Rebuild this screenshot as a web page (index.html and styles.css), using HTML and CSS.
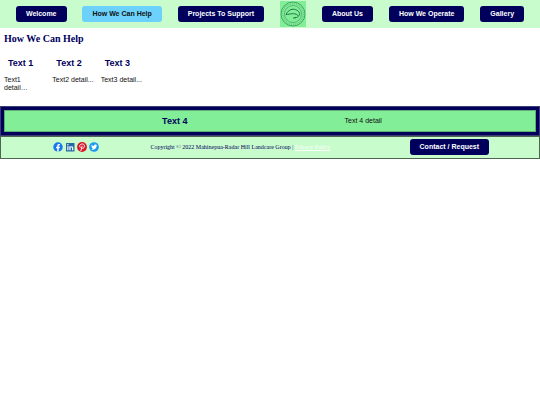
FILE: index.html
```html
<!DOCTYPE html>
<html lang="en">
<head>
  <meta charset="UTF-8" />
  <meta name="viewport" content="width=device-width, initial-scale=1.0"/>
  <title>How We Can Help</title>
  <link rel="stylesheet" href="styles.css">
</head>
<body>
  <header>
    <nav class="navbar">
      <a href="#" class="btn">Welcome</a>
      <a href="#" class="btn active">How We Can Help</a>
      <a href="#" class="btn">Projects To Support</a>
      <a href="#" class="logo" aria-label="Home">
        <svg viewBox="0 0 26 26" fill="none" stroke="#1d6b41">
          <circle cx="13" cy="13" r="12" stroke-width="0.7" opacity="0.8"/>
          <circle cx="13" cy="13" r="10.3" stroke-width="1.4" stroke-dasharray="0.8 1.1" opacity="0.35"/>
          <circle cx="13" cy="13" r="8.5" stroke-width="0.6" opacity="0.7"/>
          <path d="M6 13.500 C7.500 11 9 8.300 13 8.200 C17 8.200 20 11 19.500 13.500 C19 15.500 17 17 14.500 16.500 M6 13.500 C10 13.500 14 11 18 14.500 M13 17 L15.500 17" stroke-width="0.9"/>
        </svg>
      </a>
      <a href="#" class="btn">About Us</a>
      <a href="#" class="btn">How We Operate</a>
      <a href="#" class="btn">Gallery</a>
    </nav>
  </header>

  <main>
    <h1>How We Can Help</h1>

    <div class="help-grid">
      <section class="help-item narrow">
        <h2>Text 1</h2>
        <p>Text1 detail…</p>
      </section>
      <section class="help-item">
        <h2>Text 2</h2>
        <p>Text2 detail...</p>
      </section>
      <section class="help-item">
        <h2>Text 3</h2>
        <p>Text3 detail...</p>
      </section>
    </div>

    <div class="banner">
      <section class="banner-inner">
        <h2>Text 4</h2>
        <p>Text 4 detail</p>
      </section>
    </div>
  </main>

  <footer>
    <div class="social">
      <a href="#" aria-label="Facebook">
        <svg viewBox="0 0 20 20">
          <circle cx="10" cy="10" r="9.500" fill="#1877f2"/>
          <path d="M8.400 19.400 V12.500 H6 V9.700 H8.400 V7.700 C8.400 5.200 9.900 3.900 12 3.900 L14 4.100 V6.500 H12.800 C11.700 6.500 11.400 7.100 11.400 7.900 V9.700 H14 L13.500 12.500 H11.400 V19.400 Z" fill="#fff"/>
        </svg>
      </a>
      <a href="#" aria-label="LinkedIn">
        <svg viewBox="0 0 20 20">
          <rect x="2" y="2" width="17" height="17" rx="1" fill="#2468a4"/>
          <path d="M4.500 8.500 H7 V16.500 H4.500 Z M8.700 8.500 H11 V9.700 C12.500 7.600 16.500 8 16.500 11.700 V16.500 H14 V12.300 C14 9.800 11.200 9.900 11.200 12.300 V16.500 H8.700 Z" fill="#fff"/>
          <circle cx="5.800" cy="5.700" r="1.500" fill="#fff"/>
        </svg>
      </a>
      <a href="#" aria-label="Pinterest">
        <svg viewBox="0 0 20 20">
          <circle cx="10" cy="10" r="9.800" fill="#d9152a"/>
          <path d="M6.800 11.300 C3.500 7.500 6.500 4 10.400 4 C14 4 15.500 6.500 14.700 9.500 C13.900 12.600 11.200 13.500 9.700 12 M10.400 7.500 L7.600 18" fill="none" stroke="#fff" stroke-width="1.900"/>
        </svg>
      </a>
      <a href="#" aria-label="Twitter">
        <svg viewBox="0 0 20 20">
          <circle cx="10" cy="10" r="9.700" fill="#1d9bf0"/>
          <path d="M4.500 14.300 C6 14.400 7 14 8 13.400 C6.800 13.200 6 12.500 5.700 11.500 H6.800 C5.500 11 4.800 10 4.800 8.900 L5.800 9.100 C4.700 8.200 4.500 7 5.200 5.700 C6.500 7.300 8.200 8.100 10.100 8.200 C9.700 6.300 11 5 12.500 5 C13.300 5 13.900 5.300 14.400 5.800 L16 5.200 L15.100 6.600 L16.400 6.300 L15.200 7.600 C15.300 13.500 9.500 17.300 4.500 14.300 Z" fill="#fff"/>
        </svg>
      </a>
    </div>
    <p class="copyright">Copyright © 2022 Mahinepua-Radar Hill Landcare Group | <a href="#">Privacy Policy</a></p>
    <div class="contact">
      <a href="#" class="btn">Contact / Request</a>
    </div>
  </footer>
</body>
</html>
```

FILE: styles.css
```css
* {
  box-sizing: border-box;
}

body {
  margin: 0;
  font-family: "Liberation Sans", Arial, sans-serif;
  font-size: 7px;
  line-height: 8px;
  color: #111;
  background-color: #fff;
}

h1, h2, p {
  margin: 0;
}

h1 {
  padding: 5px 4px 4px;
  font-family: "Liberation Serif", "Times New Roman", serif;
  font-size: 10px;
  line-height: 12px;
  color: #00005c;
}

h2 {
  padding: 0 4px;
  font-size: 9px;
  line-height: 12px;
  color: #00005c;
}

.navbar {
  display: flex;
  justify-content: space-evenly;
  align-items: center;
  padding: 1px 0;
  background-color: #c8fccc;
}

.btn {
  padding: 4px 10px;
  border-radius: 3px;
  background-color: #00005c;
  color: #fff;
  font-weight: bold;
  text-decoration: none;
  white-space: nowrap;
}

.btn:hover,
.btn.active {
  background-color: #6cd2fb;
  color: #111;
}

.logo {
  display: block;
  background-color: #82ee98;
}

.logo svg {
  display: block;
  width: 26px;
  height: 26px;
}

.help-grid {
  display: grid;
  grid-template-columns: repeat(11, 1fr);
  padding: 8px 4px 14px;
}

.help-item h2 {
  margin-bottom: 7px;
  white-space: nowrap;
}

.help-item p {
  white-space: nowrap;
}

.help-item.narrow p {
  padding-right: 12px;
  white-space: normal;
}

.banner {
  padding: 3px;
  border: 1px solid #3c3c70;
  background-color: #00005c;
}

.banner-inner {
  display: flex;
  justify-content: space-evenly;
  align-items: center;
  padding: 4px 0;
  border: 1px solid #5cae74;
  background-color: #82ee98;
}

footer {
  display: grid;
  grid-template-columns: 5fr 7fr 6fr;
  align-items: center;
  padding: 2px 0 3px;
  border: 1px solid #4c6650;
  background-color: #c8fccc;
}

.social {
  display: flex;
  justify-content: center;
  gap: 2px;
}

.social svg {
  display: block;
  width: 10px;
  height: 10px;
}

.copyright {
  font-family: "Liberation Serif", "Times New Roman", serif;
  font-size: 6px;
  color: #00005c;
  white-space: nowrap;
}

.copyright a {
  color: #fff;
}

.contact {
  display: flex;
  justify-content: center;
}
```
